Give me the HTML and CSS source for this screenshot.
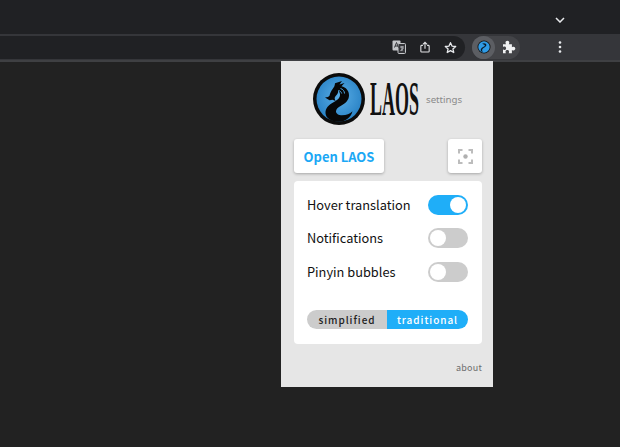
FILE: index.html
```html
<!DOCTYPE html>
<html lang="en">
<head>
<meta charset="utf-8">
<title>LAOS settings</title>
<link rel="stylesheet" href="styles.css">
</head>
<body>
<div class="tabstrip">
  <svg class="chevron" width="10" height="6" viewBox="0 0 10 6"><path d="M1 1l4 4 4-4" fill="none" stroke="#e8eaed" stroke-width="1.5"/></svg>
</div>
<div class="toolbar">
  <div class="omnibox">
    <svg class="tool-icon" width="14" height="14" viewBox="0 0 14 14"><rect x="0.5" y="0.5" width="8" height="10" rx="1" fill="#c4c6c9"/><rect x="6" y="3.5" width="7.5" height="10" rx="1" fill="#35363a" stroke="#c4c6c9"/><path d="M2.5 7.500l2-5 2 5M3 6h3" fill="none" stroke="#35363a" stroke-width="1"/><path d="M8 7h4M10 6v5M8.500 11l3-3" fill="none" stroke="#c4c6c9" stroke-width=".9"/></svg>
    <svg class="tool-icon" width="10" height="14" viewBox="0 0 12 14"><path d="M3.500 5H2a1 1 0 0 0-1 1v6a1 1 0 0 0 1 1h8a1 1 0 0 0 1-1V6a1 1 0 0 0-1-1H8.500" fill="none" stroke="#e3e4e6" stroke-width="1.300"/><path d="M6 9V1.500M3.500 3.800L6 1.300l2.500 2.500" fill="none" stroke="#e3e4e6" stroke-width="1.300"/></svg>
    <svg class="tool-icon" width="13" height="13" viewBox="0 0 14 13"><path d="M7 1.300l1.600 3.700 4 .4-3 2.600.9 3.900L7 9.900l-3.500 2 .9-3.900-3-2.600 4-.4z" fill="none" stroke="#e8eaed" stroke-width="1.400" stroke-linejoin="round"/></svg>
  </div>
  <div class="ext-group">
    <span class="ext-active">
      <svg width="14" height="14" viewBox="0 0 14 14"><circle cx="7" cy="7" r="6.500" fill="#111"/><circle cx="7" cy="7" r="5.700" fill="#2f9be6"/><path d="M5 3.800c2-1.300 4.600-.4 4.400 1.500C9.200 7 6.500 7.500 5.500 9c-.7 1.100-.4 2.400.8 2.900l-2-.3C2.900 10 4 8 6.500 6.800 7.500 6.300 8 5.800 7.800 5.200 7.500 4.500 6 4.300 5 3.800z" fill="#0c1a26"/></svg>
    </span>
    <svg class="puzzle" width="14" height="14" viewBox="0 0 14 14"><path d="M1 4.200h3c-.4-.7-.5-1.200-.5-1.600C3.500 1.500 4.300.8 5.400.8s1.900.7 1.900 1.800c0 .4-.1.900-.5 1.600h3.100v3c.7-.4 1.200-.5 1.600-.5 1.100 0 1.800.8 1.800 1.900s-.7 1.900-1.800 1.900c-.4 0-.9-.1-1.600-.5v3.200H6.700c.3-.7.400-1.100.4-1.400 0-1-.8-1.700-1.800-1.700s-1.800.7-1.800 1.700c0 .3.100.7.400 1.400H1V9.600c.6.300 1 .4 1.400.4 1 0 1.700-.8 1.700-1.800S3.400 6.500 2.400 6.500c-.4 0-.8.100-1.400.4z" fill="#f1f2f3"/></svg>
  </div>
  <svg class="menu-dots" width="4" height="12" viewBox="0 0 4 12"><circle cx="2" cy="1.500" r="1.300" fill="#e8eaed"/><circle cx="2" cy="6" r="1.300" fill="#e8eaed"/><circle cx="2" cy="10.500" r="1.300" fill="#e8eaed"/></svg>
</div>
<main class="page">
  <section class="popup">
    <header class="brand">
      <svg class="logo" width="52" height="52" viewBox="0 0 52 52">
        <defs><radialGradient id="disc" cx="50%" cy="45%" r="55%"><stop offset="0" stop-color="#5aaee6"/><stop offset="1" stop-color="#2a83c6"/></radialGradient></defs>
        <circle cx="26" cy="26" r="26" fill="#0b0b0b"/>
        <circle cx="26" cy="26" r="22.500" fill="url(#disc)"/>
        <path d="M29 8l-2.500 3.500 5-1.500-3 3.200c4.500 1 7.500 4.500 7.500 9 0 5-3.500 8-8 10.500-3 1.700-5 3.200-5 5.500 0 2.500 2.500 4 6 4 4.500 0 8-1.500 10.500-4-1.500 6-7 10.500-14 10.500-6.500 0-12.500-3-13-8.500-.5-5 3.500-8.500 8-11 4-2.300 6.500-4.200 6.500-7.500 0-2-.8-3.500-2-4.500.3 1.600 0 3-1 4.200-1.200 1.400-2.500 2.400-2.300 4.300l.8 2.300-3-1.300-3 .5-4.500-2.700 3-.5 1.500-1.200c.6-3 1.800-5 3.300-7 1.200-1.500 2-3 2.200-5.500z" fill="#070707"/>
        <path d="M27.500 15.500c2.500.7 4 2.700 4 5M25.500 17.500c1.700.3 2.800 1.500 3.200 3" fill="none" stroke="#4da4de" stroke-width="1"/>
      </svg>
      <span class="wordmark">LAOS</span>
      <span class="settings">settings</span>
    </header>
    <div class="actions">
      <button class="open-btn">Open LAOS</button>
      <button class="icon-btn">
        <svg width="15" height="15" viewBox="0 0 15 15"><path d="M1 4.500V1h3.500M10.500 1H14v3.500M14 10.500V14h-3.500M4.500 14H1v-3.500" fill="none" stroke="#bcbcbc" stroke-width="2"/><circle cx="7.500" cy="7.500" r="2.200" fill="#b0b0b0"/></svg>
      </button>
    </div>
    <div class="card">
      <div class="row"><span class="label">Hover translation</span><span class="switch on"></span></div>
      <div class="row"><span class="label">Notifications</span><span class="switch"></span></div>
      <div class="row"><span class="label">Pinyin bubbles</span><span class="switch"></span></div>
      <div class="segment">
        <span class="seg">simplified</span>
        <span class="seg seg-on">traditional</span>
      </div>
    </div>
    <footer class="about">about</footer>
  </section>
</main>
</body>
</html>
```
FILE: styles.css
```css
* { box-sizing: border-box; }
html, body { margin: 0; height: 100%; }
body {
  width: 620px;
  height: 447px;
  overflow: hidden;
  background: #222222;
  display: flex;
  flex-direction: column;
  font-family: "Noto Sans CJK JP", "Noto Sans", sans-serif;
}
.tabstrip {
  height: 34px;
  flex: none;
  background: #202124;
  display: flex;
  justify-content: flex-end;
  align-items: flex-start;
  padding: 17px 55px 0 0;
}
.toolbar {
  height: 28px;
  flex: none;
  background: #35363a;
  border-bottom: 2px solid #3f4043;
  display: flex;
  align-items: center;
  padding: 0 58px 0 0;
}
.omnibox {
  width: 465px;
  height: 23px;
  flex: none;
  background: #202124;
  border-radius: 0 12px 12px 0;
  display: flex;
  align-items: center;
  justify-content: flex-end;
  gap: 14px;
  padding-right: 8px;
}
.tool-icon { display: block; flex: none; }
.ext-group {
  margin-left: 7px;
  height: 23px;
  width: 48px;
  flex: none;
  border-radius: 12px;
  background: #434448;
  display: flex;
  align-items: center;
}
.ext-active {
  width: 23px;
  height: 23px;
  border-radius: 50%;
  background: #5c5e63;
  display: flex;
  align-items: center;
  justify-content: center;
}
.puzzle { margin-left: 7px; }
.menu-dots { margin-left: 38px; display: block; }
.page { flex: 1; position: relative; background: #222222; }
.popup {
  position: absolute;
  left: 281px;
  top: -1px;
  width: 212px;
  height: 326px;
  background: #e6e6e6;
  padding: 12px 11px 0 13px;
  display: flex;
  flex-direction: column;
}
.brand {
  display: flex;
  align-items: center;
  height: 52px;
  padding-left: 19px;
}
.logo { flex: none; display: block; }
.wordmark {
  font-family: "Liberation Serif", serif;
  font-size: 48px;
  font-weight: 700;
  line-height: 52px;
  color: #111;
  width: 54px;
  margin-left: 5px;
  transform: scaleX(0.375);
  transform-origin: left center;
}
.settings {
  font-family: "Noto Sans", sans-serif;
  font-size: 9.700px;
  color: #8a8a8a;
  margin-left: 2px;
}
.actions {
  display: flex;
  justify-content: space-between;
  margin-top: 14px;
  height: 34px;
}
.open-btn, .icon-btn {
  border: 0;
  background: #fff;
  border-radius: 3px;
  box-shadow: 0 1px 3px rgba(0,0,0,.28);
  font-family: inherit;
  padding: 0;
  display: flex;
  align-items: center;
  justify-content: center;
}
.open-btn {
  width: 90px;
  color: #1ba8f5;
  font-size: 13px;
  font-weight: 700;
}
.icon-btn { width: 34px; }
.card {
  margin-top: 8px;
  height: 163px;
  background: #fff;
  border-radius: 4px;
  padding: 7px 14px 0 13px;
  display: flex;
  flex-direction: column;
}
.row {
  height: 33.500px;
  display: flex;
  align-items: center;
  justify-content: space-between;
  font-size: 12.800px;
  color: #111;
}
.label { margin-top: -1px; }
.switch {
  width: 40px;
  height: 20px;
  border-radius: 10px;
  background: #cccccc;
  padding: 2px;
  display: flex;
}
.switch::after {
  content: "";
  width: 16px;
  height: 16px;
  border-radius: 50%;
  background: #fff;
}
.switch.on { background: #1faef8; justify-content: flex-end; }
.segment {
  margin-top: 21.500px;
  height: 19px;
  display: flex;
  border-radius: 10px;
  overflow: hidden;
  font-size: 10px;
  letter-spacing: .95px;
  font-weight: 500;
}
.seg {
  flex: none;
  width: 80px;
  background: #cccccc;
  color: #222;
  display: flex;
  align-items: center;
  justify-content: center;
}
.seg-on { background: #1faef8; color: #fff; width: 81px; }
.about {
  margin-top: 17px;
  text-align: right;
  font-size: 9px;
  color: #6e6e6e;
  letter-spacing: .2px;
}
```
